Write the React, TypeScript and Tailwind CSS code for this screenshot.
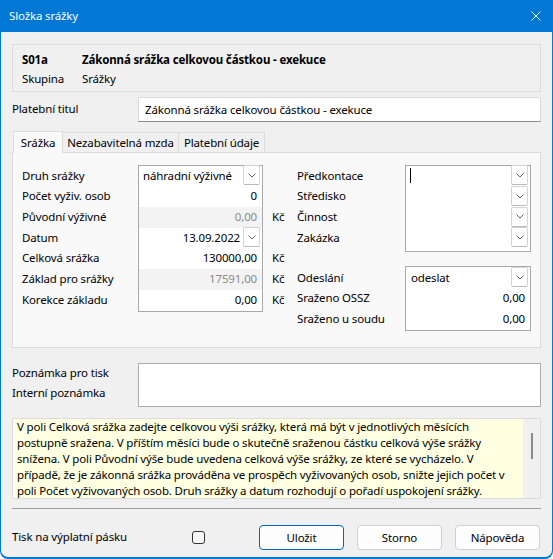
import React from "react";

function Chevron() {
  return (
    <svg width="8" height="5" viewBox="0 0 8 5">
      <path d="M0.5 0.5 L4 4 L7.5 0.5" fill="none" stroke="#5f5f5f" strokeWidth="1" />
    </svg>
  );
}

function DropBtn() {
  return (
    <div className="w-[17px] h-[20px] shrink-0 border border-[#d4d4d4] border-b-[#b8b8b8] rounded-[2px] bg-white flex items-center justify-center">
      <Chevron />
    </div>
  );
}

const ROW = "h-[20.7px] flex items-center pb-[2px]";

export default function App() {
  return (
    <div className="w-[553px] h-[559px] bg-[#0078d4] flex flex-col text-[11.5px] tracking-[-0.15px] text-black font-['Noto_Sans',sans-serif] overflow-hidden rounded-b-[8px]">
      <div className="h-[32px] shrink-0 flex items-center justify-between pl-[9px] pr-[12px] text-white">
        <span>Složka srážky</span>
        <svg width="10" height="10" viewBox="0 0 10 10">
          <path d="M0.5 0.5L9.5 9.5M9.5 0.5L0.5 9.5" stroke="white" strokeWidth="1" />
        </svg>
      </div>
      <div className="flex-1 mx-[1px] mb-[2px] bg-[#f0f0f0] rounded-b-[7px] flex flex-col px-[11px]">
        {/* header box */}
        <div className="mt-[12px] h-[48px] border border-[#dcdcdc] pl-[9px] pt-[5px] flex flex-col">
          <div className="h-[19px] flex items-center font-bold">
            <span className="w-[60px]">S01a</span>
            <span>Zákonná srážka celkovou částkou - exekuce</span>
          </div>
          <div className="h-[19px] flex items-center">
            <span className="w-[60px]">Skupina</span>
            <span>Srážky</span>
          </div>
        </div>

        {/* platebni titul */}
        <div className="mt-[5px] h-[25px] flex items-center">
          <span className="w-[126px] pb-[2px]">Platební titul</span>
          <div className="flex-1 h-[25px] bg-white border border-[#dadada] border-b-[#8a8a8a] pl-[6px] flex items-center">
            Zákonná srážka celkovou částkou - exekuce
          </div>
        </div>

        {/* tabs */}
        <div className="mt-[9px] h-[22px] -mb-[1px] flex items-end pl-[1px] relative z-10">
          <div className="w-[50px] h-[22px] bg-[#f9f9f9] border border-[#dcdcdc] border-b-0 flex items-center justify-center">
            Srážka
          </div>
          <div className="w-[116px] h-[20px] mb-[1px] border-t border-r border-[#dcdcdc] flex items-center justify-center">
            Nezabavitelná mzda
          </div>
          <div className="w-[86px] h-[20px] mb-[1px] border-t border-r border-[#dcdcdc] flex items-center justify-center">
            Platební údaje
          </div>
        </div>

        {/* tab panel */}
        <div className="h-[196px] border border-[#dcdcdc] bg-[#f9f9f9] flex pt-[12px] pl-[9px]">
          {/* left labels */}
          <div className="w-[116px] pt-[1px] flex flex-col">
            <div className={ROW}>Druh srážky</div>
            <div className={ROW}>Počet vyživ. osob</div>
            <div className={ROW}>Původní výživné</div>
            <div className={ROW}>Datum</div>
            <div className={ROW}>Celková srážka</div>
            <div className={ROW}>Základ pro srážky</div>
            <div className={ROW}>Korekce základu</div>
          </div>
          {/* left box */}
          <div className="w-[125px] h-[147px] border border-[#a8a8a8] bg-white flex flex-col">
            <div className={`${ROW} pl-[4px] pr-[2px]`}>
              <span className="flex-1">náhradní výživné</span>
              <DropBtn />
            </div>
            <div className={`${ROW} justify-end pr-[5px]`}>0</div>
            <div className={`${ROW} justify-end pr-[5px] bg-[#f3f3f3] text-[#8c8c8c]`}>0,00</div>
            <div className={`${ROW} justify-end pr-[2px]`}>
              <span className="mr-[3px]">13.09.2022</span>
              <DropBtn />
            </div>
            <div className={`${ROW} justify-end pr-[5px]`}>130000,00</div>
            <div className={`${ROW} justify-end pr-[5px] bg-[#f3f3f3] text-[#8c8c8c]`}>17591,00</div>
            <div className={`${ROW} justify-end pr-[5px]`}>0,00</div>
          </div>
          {/* Kc column */}
          <div className="w-[34px] pl-[9px] pt-[1px] flex flex-col">
            <div className={ROW}></div>
            <div className={ROW}></div>
            <div className={ROW}>Kč</div>
            <div className={ROW}></div>
            <div className={ROW}>Kč</div>
            <div className={ROW}>Kč</div>
            <div className={ROW}>Kč</div>
          </div>
          {/* right side */}
          <div className="flex flex-col">
            <div className="flex">
              <div className="w-[108px] pt-[1px] flex flex-col">
                <div className={ROW}>Předkontace</div>
                <div className={ROW}>Středisko</div>
                <div className={ROW}>Činnost</div>
                <div className={ROW}>Zakázka</div>
              </div>
              <div className="w-[126px] h-[87px] border border-[#a8a8a8] bg-white flex flex-col">
                <div className={`${ROW} pl-[4px] pr-[2px]`}>
                  <span className="w-[1px] h-[15px] bg-black"></span>
                  <span className="flex-1"></span>
                  <DropBtn />
                </div>
                <div className={`${ROW} justify-end pr-[2px]`}>
                  <DropBtn />
                </div>
                <div className={`${ROW} justify-end pr-[2px]`}>
                  <DropBtn />
                </div>
                <div className={`${ROW} justify-end pr-[2px]`}>
                  <DropBtn />
                </div>
              </div>
            </div>
            <div className="flex mt-[14px]">
              <div className="w-[108px] pt-[2px] flex flex-col">
                <div className={ROW}>Odeslání</div>
                <div className={ROW}>Sraženo OSSZ</div>
                <div className={ROW}>Sraženo u soudu</div>
              </div>
              <div className="w-[126px] h-[65px] border border-[#a8a8a8] bg-white pt-[1px] flex flex-col">
                <div className={`${ROW} pl-[5px] pr-[2px]`}>
                  <span className="flex-1">odeslat</span>
                  <DropBtn />
                </div>
                <div className={`${ROW} justify-end pr-[5px]`}>0,00</div>
                <div className={`${ROW} justify-end pr-[5px]`}>0,00</div>
              </div>
            </div>
          </div>
        </div>

        {/* notes */}
        <div className="mt-[15px] flex">
          <div className="w-[126px] flex flex-col">
            <div className={ROW}>Poznámka pro tisk</div>
            <div className={ROW}>Interní poznámka</div>
          </div>
          <div className="flex-1 h-[44px] bg-white border border-[#adadad]"></div>
        </div>

        {/* help */}
        <div className="mt-[11px] h-[81px] border border-[#dcdcdc] flex">
          <div className="flex-1 bg-[#ffffe1] pl-[4px] pt-[0px] leading-[16px] whitespace-nowrap overflow-hidden">
            <div>V poli Celková srážka zadejte celkovou výši srážky, která má být v jednotlivých měsících</div>
            <div>postupně sražena. V příštím měsíci bude o skutečně sraženou částku celková výše srážky</div>
            <div>snížena. V poli Původní výše bude uvedena celková výše srážky, ze které se vycházelo. V</div>
            <div>případě, že je zákonná srážka prováděna ve prospěch vyživovaných osob, snižte jejich počet v</div>
            <div>poli Počet vyživovaných osob. Druh srážky a datum rozhodují o pořadí uspokojení srážky.</div>
          </div>
          <div className="w-[17px] bg-[#f0f0f0] flex justify-center pt-[14px]">
            <div className="w-[2px] h-[26px] bg-[#8a8a8a]"></div>
          </div>
        </div>

        {/* separator */}
        <div className="mt-[9px] border-t border-[#a0a0a0]"></div>

        {/* bottom */}
        <div className="mt-[16px] h-[25px] flex items-center">
          <span className="w-[180px] pb-[1px]">Tisk na výplatní pásku</span>
          <div className="w-[13px] h-[13px] border border-[#333333] rounded-[3px] bg-[#f8f8f8]"></div>
          <div className="ml-[54px] flex gap-[13px]">
            <div className="w-[85px] h-[25px] bg-[#fdfdfd] border border-[#0067c0] rounded-[4px] flex items-center justify-center">
              Uložit
            </div>
            <div className="w-[85px] h-[25px] bg-[#fdfdfd] border border-[#d0d0d0] rounded-[4px] flex items-center justify-center">
              Storno
            </div>
            <div className="w-[85px] h-[25px] bg-[#fdfdfd] border border-[#d0d0d0] rounded-[4px] flex items-center justify-center">
              Nápověda
            </div>
          </div>
        </div>
      </div>
    </div>
  );
}
